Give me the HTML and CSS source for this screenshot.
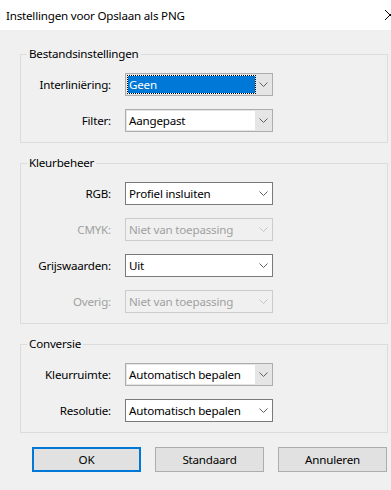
FILE: index.html
```html
<!DOCTYPE html>
<html lang="nl">
<head>
  <meta charset="UTF-8" />
  <title>Instellingen voor Opslaan als PNG</title>
  <link rel="stylesheet" href="styles.css">
</head>
<body>
  <div class="titlebar">
    <span class="title">Instellingen voor Opslaan als PNG</span>
    <svg class="close" width="6" height="12" viewBox="0 0 6 12">
      <path d="M0 1 L10 11 M10 1 L0 11" stroke="#000" stroke-width="1" fill="none"/>
    </svg>
  </div>

  <div class="dialog">
    <div class="group">
      <span class="group-title">Bestandsinstellingen</span>
      <div class="row">
        <span class="label">Interliniëring:</span>
        <div class="combo combo-btn">
          <span class="value"><span class="selected">Geen</span></span>
          <span class="arrow"><svg width="9" height="5" viewBox="0 0 9 5"><path d="M0.5 0.5 L4.5 4.5 L8.5 0.5" stroke="#606060" fill="none"/></svg></span>
        </div>
      </div>
      <div class="row">
        <span class="label">Filter:</span>
        <div class="combo combo-btn">
          <span class="value">Aangepast</span>
          <span class="arrow"><svg width="9" height="5" viewBox="0 0 9 5"><path d="M0.5 0.5 L4.5 4.5 L8.5 0.5" stroke="#606060" fill="none"/></svg></span>
        </div>
      </div>
    </div>

    <div class="group">
      <span class="group-title">Kleurbeheer</span>
      <div class="row">
        <span class="label">RGB:</span>
        <div class="combo">
          <span class="value">Profiel insluiten</span>
          <span class="arrow"><svg width="9" height="5" viewBox="0 0 9 5"><path d="M0.5 0.5 L4.5 4.5 L8.5 0.5" stroke="#606060" fill="none"/></svg></span>
        </div>
      </div>
      <div class="row disabled">
        <span class="label">CMYK:</span>
        <div class="combo">
          <span class="value">Niet van toepassing</span>
          <span class="arrow"><svg width="9" height="5" viewBox="0 0 9 5"><path d="M0.5 0.5 L4.5 4.5 L8.5 0.5" stroke="#c4c4c4" fill="none"/></svg></span>
        </div>
      </div>
      <div class="row">
        <span class="label">Grijswaarden:</span>
        <div class="combo">
          <span class="value">Uit</span>
          <span class="arrow"><svg width="9" height="5" viewBox="0 0 9 5"><path d="M0.5 0.5 L4.5 4.5 L8.5 0.5" stroke="#606060" fill="none"/></svg></span>
        </div>
      </div>
      <div class="row disabled">
        <span class="label">Overig:</span>
        <div class="combo">
          <span class="value">Niet van toepassing</span>
          <span class="arrow"><svg width="9" height="5" viewBox="0 0 9 5"><path d="M0.5 0.5 L4.5 4.5 L8.5 0.5" stroke="#c4c4c4" fill="none"/></svg></span>
        </div>
      </div>
    </div>

    <div class="group">
      <span class="group-title">Conversie</span>
      <div class="row">
        <span class="label">Kleurruimte:</span>
        <div class="combo combo-btn">
          <span class="value">Automatisch bepalen</span>
          <span class="arrow"><svg width="9" height="5" viewBox="0 0 9 5"><path d="M0.5 0.5 L4.5 4.5 L8.5 0.5" stroke="#606060" fill="none"/></svg></span>
        </div>
      </div>
      <div class="row">
        <span class="label">Resolutie:</span>
        <div class="combo">
          <span class="value">Automatisch bepalen</span>
          <span class="arrow"><svg width="9" height="5" viewBox="0 0 9 5"><path d="M0.5 0.5 L4.5 4.5 L8.5 0.5" stroke="#606060" fill="none"/></svg></span>
        </div>
      </div>
    </div>

    <div class="buttons">
      <button class="btn btn-default">OK</button>
      <button class="btn">Standaard</button>
      <button class="btn">Annuleren</button>
    </div>
  </div>
</body>
</html>
```

FILE: styles.css
```css
body {
  margin: 0;
  width: 391px;
  height: 490px;
  overflow: hidden;
  font-family: "Noto Sans", sans-serif;
  font-size: 11.6px;
  letter-spacing: -0.2px;
  color: #000;
  background: #f0f0f0;
}
.titlebar {
  height: 30px;
  background: #fff;
  display: flex;
  align-items: center;
  padding-left: 6px;
}
.close {
  margin-left: auto;
}
.dialog {
  padding: 24px 0 0 20px;
}
.group {
  position: relative;
  width: 366px;
  border: 1px solid #dcdcdc;
  padding: 18px 0 10px;
  display: flex;
  flex-direction: column;
  gap: 13px;
}
.group + .group {
  margin-top: 20px;
}
.group-title {
  position: absolute;
  top: -9px;
  left: 6px;
  padding: 0 2px;
  line-height: 16px;
  background: #f0f0f0;
}
.row {
  display: flex;
  align-items: center;
  height: 23px;
}
.label {
  width: 90px;
  margin-right: 14px;
  text-align: right;
}
.combo {
  box-sizing: border-box;
  width: 148px;
  height: 23px;
  border: 1px solid #7a7a7a;
  background: #fff;
  display: flex;
  align-items: stretch;
}
.combo .value {
  flex: 1;
  display: flex;
  align-items: center;
  padding-left: 3px;
}
.combo .arrow {
  width: 17px;
  display: flex;
  align-items: center;
  justify-content: center;
}
.combo-btn {
  border-color: #adadad;
  background: #e5e5e5;
}
.combo-btn .value {
  background: #fff;
  margin: 1px 0 1px 1px;
  padding-left: 2px;
}
.selected {
  display: flex;
  align-items: center;
  align-self: stretch;
  flex: 1;
  margin: 1px 0 1px -1px;
  padding-left: 1px;
  background: #0078d7;
  color: #fff;
  outline: 1px dotted #000;
}
.disabled .label {
  color: #a0a0a0;
}
.disabled .combo {
  border-color: #cccccc;
  background: #f0f0f0;
  color: #a0a0a0;
}
.buttons {
  display: flex;
  gap: 14px;
  margin: 14px 0 0 12px;
}
.btn {
  box-sizing: border-box;
  width: 109px;
  height: 25px;
  border: 1px solid #adadad;
  background: #e1e1e1;
  font-family: inherit;
  font-size: 11.6px;
  letter-spacing: -0.2px;
  color: #000;
  padding: 0;
}
.btn-default {
  border: 2px solid #0078d7;
}
```
